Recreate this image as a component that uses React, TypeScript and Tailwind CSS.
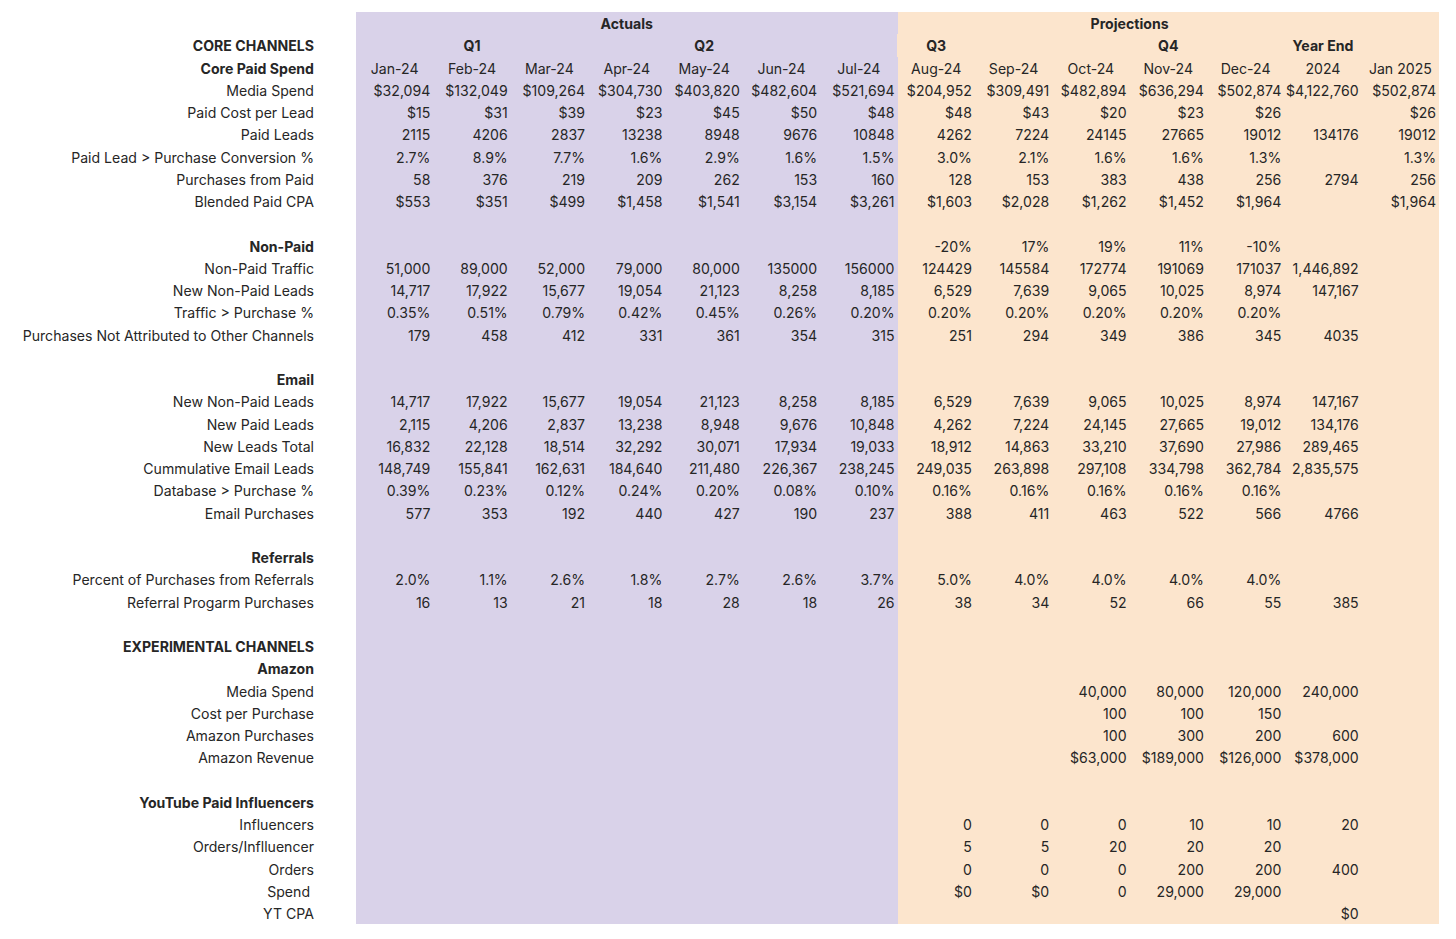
import React from 'react';

type Row = {
  label: string;
  bold?: boolean;
  values?: string[];
};

const E = '';

// 14 data columns: Jan-24 .. Jul-24 are actuals, Aug-24 .. Jan 2025 are projections
const months = ['Jan-24', 'Feb-24', 'Mar-24', 'Apr-24', 'May-24', 'Jun-24', 'Jul-24', 'Aug-24', 'Sep-24', 'Oct-24', 'Nov-24', 'Dec-24', '2024', 'Jan 2025'];

const rows: Row[] = [
  { label: 'Media Spend', values: ['$32,094', '$132,049', '$109,264', '$304,730', '$403,820', '$482,604', '$521,694', '$204,952', '$309,491', '$482,894', '$636,294', '$502,874', '$4,122,760', '$502,874'] },
  { label: 'Paid Cost per Lead', values: ['$15', '$31', '$39', '$23', '$45', '$50', '$48', '$48', '$43', '$20', '$23', '$26', E, '$26'] },
  { label: 'Paid Leads', values: ['2115', '4206', '2837', '13238', '8948', '9676', '10848', '4262', '7224', '24145', '27665', '19012', '134176', '19012'] },
  { label: 'Paid Lead > Purchase Conversion %', values: ['2.7%', '8.9%', '7.7%', '1.6%', '2.9%', '1.6%', '1.5%', '3.0%', '2.1%', '1.6%', '1.6%', '1.3%', E, '1.3%'] },
  { label: 'Purchases from Paid', values: ['58', '376', '219', '209', '262', '153', '160', '128', '153', '383', '438', '256', '2794', '256'] },
  { label: 'Blended Paid CPA', values: ['$553', '$351', '$499', '$1,458', '$1,541', '$3,154', '$3,261', '$1,603', '$2,028', '$1,262', '$1,452', '$1,964', E, '$1,964'] },
  { label: '' },
  { label: 'Non-Paid', bold: true, values: [E, E, E, E, E, E, E, '-20%', '17%', '19%', '11%', '-10%', E, E] },
  { label: 'Non-Paid Traffic', values: ['51,000', '89,000', '52,000', '79,000', '80,000', '135000', '156000', '124429', '145584', '172774', '191069', '171037', '1,446,892', E] },
  { label: 'New Non-Paid Leads', values: ['14,717', '17,922', '15,677', '19,054', '21,123', '8,258', '8,185', '6,529', '7,639', '9,065', '10,025', '8,974', '147,167', E] },
  { label: 'Traffic > Purchase %', values: ['0.35%', '0.51%', '0.79%', '0.42%', '0.45%', '0.26%', '0.20%', '0.20%', '0.20%', '0.20%', '0.20%', '0.20%', E, E] },
  { label: 'Purchases Not Attributed to Other Channels', values: ['179', '458', '412', '331', '361', '354', '315', '251', '294', '349', '386', '345', '4035', E] },
  { label: '' },
  { label: 'Email', bold: true },
  { label: 'New Non-Paid Leads', values: ['14,717', '17,922', '15,677', '19,054', '21,123', '8,258', '8,185', '6,529', '7,639', '9,065', '10,025', '8,974', '147,167', E] },
  { label: 'New Paid Leads', values: ['2,115', '4,206', '2,837', '13,238', '8,948', '9,676', '10,848', '4,262', '7,224', '24,145', '27,665', '19,012', '134,176', E] },
  { label: 'New Leads Total', values: ['16,832', '22,128', '18,514', '32,292', '30,071', '17,934', '19,033', '18,912', '14,863', '33,210', '37,690', '27,986', '289,465', E] },
  { label: 'Cummulative Email Leads', values: ['148,749', '155,841', '162,631', '184,640', '211,480', '226,367', '238,245', '249,035', '263,898', '297,108', '334,798', '362,784', '2,835,575', E] },
  { label: 'Database > Purchase %', values: ['0.39%', '0.23%', '0.12%', '0.24%', '0.20%', '0.08%', '0.10%', '0.16%', '0.16%', '0.16%', '0.16%', '0.16%', E, E] },
  { label: 'Email Purchases', values: ['577', '353', '192', '440', '427', '190', '237', '388', '411', '463', '522', '566', '4766', E] },
  { label: '' },
  { label: 'Referrals', bold: true },
  { label: 'Percent of Purchases from Referrals', values: ['2.0%', '1.1%', '2.6%', '1.8%', '2.7%', '2.6%', '3.7%', '5.0%', '4.0%', '4.0%', '4.0%', '4.0%', E, E] },
  { label: 'Referral Progarm Purchases', values: ['16', '13', '21', '18', '28', '18', '26', '38', '34', '52', '66', '55', '385', E] },
  { label: '' },
  { label: 'EXPERIMENTAL CHANNELS', bold: true },
  { label: 'Amazon', bold: true },
  { label: 'Media Spend', values: [E, E, E, E, E, E, E, E, E, '40,000', '80,000', '120,000', '240,000', E] },
  { label: 'Cost per Purchase', values: [E, E, E, E, E, E, E, E, E, '100', '100', '150', E, E] },
  { label: 'Amazon Purchases', values: [E, E, E, E, E, E, E, E, E, '100', '300', '200', '600', E] },
  { label: 'Amazon Revenue', values: [E, E, E, E, E, E, E, E, E, '$63,000', '$189,000', '$126,000', '$378,000', E] },
  { label: '' },
  { label: 'YouTube Paid Influencers', bold: true },
  { label: 'Influencers', values: [E, E, E, E, E, E, E, '0', '0', '0', '10', '10', '20', E] },
  { label: 'Orders/Inflluencer', values: [E, E, E, E, E, E, E, '5', '5', '20', '20', '20', E, E] },
  { label: 'Orders', values: [E, E, E, E, E, E, E, '0', '0', '0', '200', '200', '400', E] },
  { label: 'Spend\u00a0', values: [E, E, E, E, E, E, E, '$0', '$0', '0', '29,000', '29,000', E, E] },
  { label: 'YT CPA', values: [E, E, E, E, E, E, E, E, E, E, E, E, '$0', E] },
];

const purple = 'bg-[#d9d2e9]';
const orange = 'bg-[#fce5cd]';
const colBg = (i: number) => (i < 7 ? purple : orange);

const Label = ({ children, bold }: { children: React.ReactNode; bold?: boolean }) => (
  <div className={`h-[22.25px] pt-[2px] flex items-center justify-end pr-[42px] whitespace-pre ${bold ? 'font-bold' : ''}`}>
    {children}
  </div>
);

export default function App() {
  return (
    <div className="min-h-screen bg-white pt-[12px] text-[14.1px] text-[#262626]" style={{ fontFamily: 'Inter, "Noto Sans", sans-serif' }}>
      <div className="grid grid-cols-[356px_repeat(14,77.36px)] leading-none">
        {/* Section banner */}
        <Label>{''}</Label>
        <div className={`col-span-7 h-[22.25px] pt-[2px] flex items-center justify-center font-bold ${purple}`}>Actuals</div>
        <div className={`col-span-6 h-[22.25px] pt-[2px] flex items-center justify-center font-bold ${orange}`}>Projections</div>
        <div className={`h-[22.25px] ${orange}`} />

        {/* Quarters */}
        <Label bold>CORE CHANNELS</Label>
        <div className={`col-span-3 h-[22.25px] pt-[2px] flex items-center justify-center font-bold ${purple}`}>Q1</div>
        <div className={`col-span-3 h-[22.25px] pt-[2px] flex items-center justify-center font-bold ${purple}`}>Q2</div>
        <div className="col-span-3 h-[22.25px] pt-[2px] flex items-center justify-center font-bold bg-[linear-gradient(to_right,#d9d2e9_33.333%,#fce5cd_33.333%)]">Q3</div>
        <div className={`col-span-3 h-[22.25px] pt-[2px] flex items-center justify-center font-bold ${orange}`}>Q4</div>
        <div className={`h-[22.25px] pt-[2px] flex items-center justify-center font-bold ${orange}`}>Year End</div>
        <div className={`h-[22.25px] ${orange}`} />

        {/* Months */}
        <Label bold>Core Paid Spend</Label>
        {months.map((m, i) => (
          <div key={m} className={`h-[22.25px] pt-[2px] flex items-center justify-center ${colBg(i)}`}>{m}</div>
        ))}

        {rows.map((r, ri) => (
          <React.Fragment key={ri}>
            <Label bold={r.bold}>{r.label}</Label>
            {Array.from({ length: 14 }).map((_, i) => (
              <div key={i} className={`h-[22.25px] pt-[2px] flex items-center justify-end pr-[3px] whitespace-nowrap ${colBg(i)}`}>
                {r.values ? r.values[i] : ''}
              </div>
            ))}
          </React.Fragment>
        ))}
      </div>
    </div>
  );
}
